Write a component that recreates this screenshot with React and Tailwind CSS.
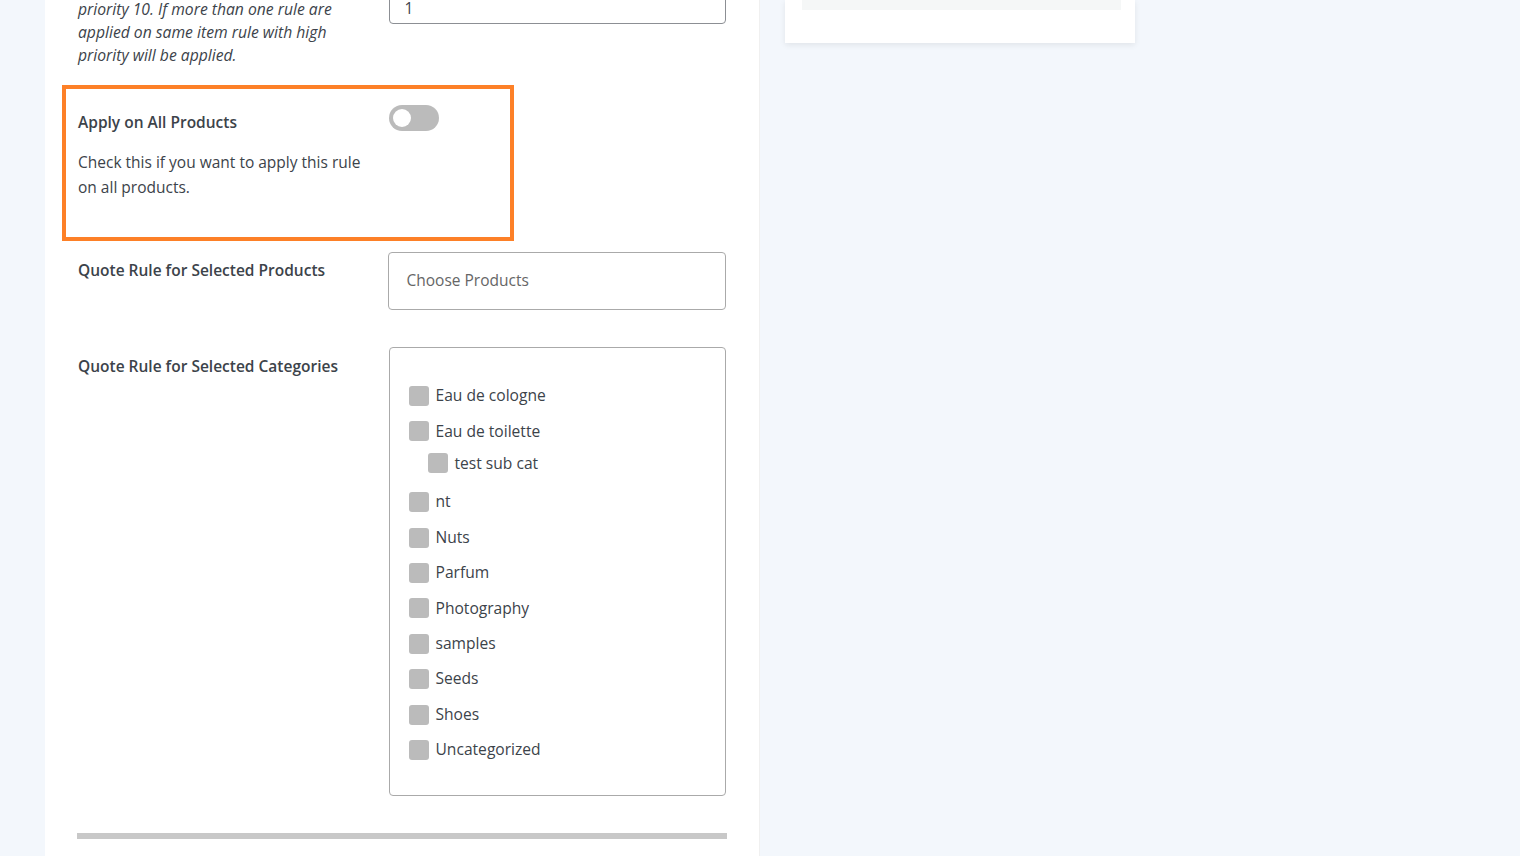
import React from "react";

const cats = [
  { name: "Eau de cologne" },
  { name: "Eau de toilette" },
  { name: "test sub cat", sub: true },
  { name: "nt" },
  { name: "Nuts" },
  { name: "Parfum" },
  { name: "Photography" },
  { name: "samples" },
  { name: "Seeds" },
  { name: "Shoes" },
  { name: "Uncategorized" },
];

function Check({ name, sub }) {
  return (
    <div
      className={`flex items-center gap-[7px] h-[35.4px] ${sub ? "pl-[19px] mt-[-3.5px] mb-[3.5px]" : ""}`}
    >
      <span className="w-[20px] h-[20px] rounded-[3px] bg-[#bbbbbb] shrink-0" />
      <span className="text-[15.6px] text-[#3c434a]">{name}</span>
    </div>
  );
}

export default function App() {
  return (
    <div
      className="flex w-[1520px] h-[856px] overflow-hidden bg-[#f3f7fc]"
      style={{ fontFamily: '"Open Sans", "Noto Sans", sans-serif' }}
    >
      <div className="w-[45px] shrink-0" />
      <div className="w-[715px] shrink-0 bg-white pl-[33px] pr-[33px] border-r border-[#f0f0f0]">
        {/* priority row */}
        <div className="flex mt-[-2px]">
          <div className="w-[311px] pr-[30px] text-[15.7px] leading-[23px] italic text-[#3c434a]">
            priority 10. If more than one rule are applied on same item rule with high priority will be applied.
          </div>
          <div className="w-[338px] h-[40px] mt-[-14px] border border-[#8c8f94] rounded-[4px] flex items-end pb-[5px] pl-[15px] text-[15.5px] leading-[20px] text-[#3c434a]">
            1
          </div>
        </div>

        {/* apply on all products */}
        <div className="mt-[18px] ml-[-16px] w-[452px] h-[156px] border-4 border-[#fd8027] flex pl-[12px] pt-[16px]">
          <div className="w-[311px]">
            <div className="text-[15.5px] font-semibold text-[#3c434a] leading-[24px] pt-[5px]">Apply on All Products</div>
            <div className="text-[15.5px] text-[#3c434a] leading-[25px] mt-[16px] pr-[10px]">
              Check this if you want to apply this rule on all products.
            </div>
          </div>
          <div className="w-[50px] h-[26px] rounded-full bg-[#bbbbbb] relative">
            <span className="absolute left-[4px] top-[4px] w-[18px] h-[18px] rounded-full bg-white" />
          </div>
        </div>

        {/* selected products */}
        <div className="flex mt-[11px]">
          <div className="w-[310px] text-[15.5px] font-semibold text-[#3c434a] leading-[24px] pt-[6px]">
            Quote Rule for Selected Products
          </div>
          <div className="w-[339px] h-[58px] border border-[#aaaaaa] rounded-[4px] flex items-start pt-[15px] pl-[18px] text-[15.5px] leading-[24px] text-[#666666]">
            Choose Products
          </div>
        </div>

        {/* categories */}
        <div className="flex mt-[37px]">
          <div className="w-[311px] text-[15.5px] font-semibold text-[#3c434a] leading-[24px] pt-[7px]">
            Quote Rule for Selected Categories
          </div>
          <div className="w-[338px] h-[449px] border border-[#aaaaaa] rounded-[4px] pl-[19px] pt-[30.3px]">
            {cats.map((c) => (
              <Check key={c.name} {...c} />
            ))}
          </div>
        </div>

        <div className="mt-[37px] ml-[-1px] w-[650px] h-[6px] bg-[#c8c8c8]" />
      </div>

      <div className="w-[25px] shrink-0" />
      <div className="w-[350px] h-[43px] bg-white shadow-[0_2px_6px_rgba(0,0,0,0.08)] px-[17px] shrink-0">
        <div className="w-[319px] h-[10px] bg-[#f5f7f7]" />
      </div>
    </div>
  );
}
